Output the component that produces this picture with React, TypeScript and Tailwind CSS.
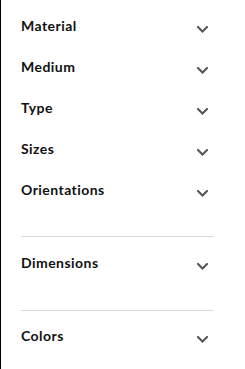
const topFilters = ['Material', 'Medium', 'Type', 'Sizes', 'Orientations']

function Chevron() {
  return (
    <svg width="11" height="7" viewBox="0 0 11 7" className="mt-[10px] mr-[6px] shrink-0">
      <polyline points="1,1 5.5,5.5 10,1" fill="none" stroke="#555" strokeWidth="2" strokeLinecap="square" />
    </svg>
  )
}

function FilterRow({ label }: { label: string }) {
  return (
    <div className="flex items-start justify-between">
      <span className="text-[14px] leading-5 font-bold tracking-[0.45px] text-[#111]">{label}</span>
      <Chevron />
    </div>
  )
}

export default function App() {
  return (
    <div
      className="h-[369px] w-[245px] bg-white border-l border-black pl-[20px] pr-[31px] pt-[16px]"
      style={{ fontFamily: 'Lato, "Noto Sans", sans-serif' }}
    >
      <div className="flex flex-col gap-[21px]">
        {topFilters.map((f) => (
          <FilterRow key={f} label={f} />
        ))}
      </div>

      <div className="mt-[36px] h-px bg-[#d9d9d9]" />

      <div className="mt-[16px]">
        <FilterRow label="Dimensions" />
      </div>

      <div className="mt-[37px] h-px bg-[#d9d9d9]" />

      <div className="mt-[15px]">
        <FilterRow label="Colors" />
      </div>
    </div>
  )
}
